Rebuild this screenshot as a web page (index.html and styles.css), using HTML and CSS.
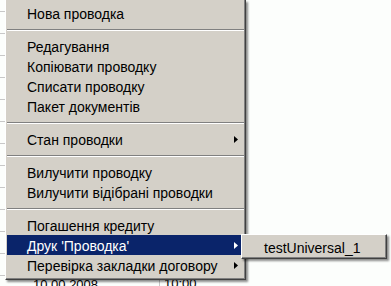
FILE: index.html
```html
<!DOCTYPE html>
<html>
<head>
<meta charset="utf-8">
<link rel="stylesheet" href="styles.css">
</head>
<body>
<div class="screen">
  <div class="grid">
    <div class="row"></div><div class="row"></div><div class="row"></div><div class="row"></div>
    <div class="row"></div><div class="row"></div><div class="row"></div><div class="row"></div>
    <div class="row"></div><div class="row"></div><div class="row"></div><div class="row"></div>
    <div class="row last"><span class="c1">10.00.2008</span><span class="c2">10:00</span></div>
  </div>

  <div class="menu">
    <div class="item">Нова проводка</div>
    <div class="sep"></div>
    <div class="item">Редагування</div>
    <div class="item">Копіювати проводку</div>
    <div class="item">Списати проводку</div>
    <div class="item">Пакет документів</div>
    <div class="sep"></div>
    <div class="item sub">Стан проводки<svg class="arrow" width="4" height="7" viewBox="0 0 4 7"><polygon points="0,0 4,3.5 0,7"/></svg></div>
    <div class="sep"></div>
    <div class="item">Вилучити проводку</div>
    <div class="item">Вилучити відібрані проводки</div>
    <div class="sep"></div>
    <div class="item">Погашення кредиту</div>
    <div class="item sub active">Друк 'Проводка'<svg class="arrow" width="4" height="7" viewBox="0 0 4 7"><polygon points="0,0 4,3.5 0,7"/></svg></div>
    <div class="item sub">Перевірка закладки договору<svg class="arrow" width="4" height="7" viewBox="0 0 4 7"><polygon points="0,0 4,3.5 0,7"/></svg></div>
  </div>

  <div class="submenu">
    <div class="item">testUniversal_1</div>
  </div>
</div>
</body>
</html>
```
FILE: styles.css
```css
html, body {
  margin: 0;
  padding: 0;
}
body {
  background: #fcfefc;
  font-family: "Liberation Sans", Arial, sans-serif;
  font-size: 14px;
  color: #000;
}
.screen {
  position: relative;
  width: 391px;
  height: 286px;
  overflow: hidden;
}
.grid {
  display: flex;
  flex-direction: column;
  padding-top: 11px;
}
.row {
  height: 22px;
  box-sizing: border-box;
  border-top: 1px solid #c8c8c8;
  width: 240px;
  flex: none;
}
.row.last {
  display: flex;
  align-items: flex-start;
  font-size: 13px;
  line-height: 15px;
  padding-top: 1px;
}
.row.last .c1 { flex: none; margin-left: 33px; width: 126px; }
.row.last .c2 { flex: none; border-left: 1px solid #c8c8c8; padding-left: 4px; height: 22px; margin-top: -1px; }

.menu {
  position: absolute;
  left: 5px;
  top: 0;
  width: 241px;
  height: 280px;
  padding: 3px 3px 3px 1px;
  box-sizing: border-box;
  background: #d4d0c8;
  border-left: 1px solid #ffffff;
  border-bottom: 1px solid #404040;
  border-right: 1px solid #404040;
  box-shadow: inset -1px -1px 0 #808080, 2px 2px 2px rgba(0,0,0,0.45);
}
.item {
  height: 20px;
  line-height: 20px;
  padding-left: 20px;
  padding-top: 1px;
  box-sizing: border-box;
  white-space: nowrap;
  display: flex;
  align-items: center;
}
.sub .arrow {
  margin-left: auto;
  margin-right: 4px;
  fill: #000;
}
.item.active {
  background: #0a246a;
  color: #fff;
}
.item.active .arrow { fill: #fff; }
.sep {
  height: 13px;
  box-sizing: border-box;
  padding-top: 6px;
  margin-right: -2px;
}
.sep::before {
  content: "";
  display: block;
  height: 1px;
  background: #808080;
  border-bottom: 1px solid #ffffff;
}

.submenu {
  position: absolute;
  left: 241px;
  top: 234px;
  width: 146px;
  height: 25px;
  box-sizing: border-box;
  padding: 2px;
  background: #d4d0c8;
  border-left: 1px solid #ffffff;
  border-top: 1px solid #ffffff;
  border-right: 1px solid #404040;
  border-bottom: 1px solid #404040;
  box-shadow: inset -1px -1px 0 #808080, 2px 2px 2px rgba(0,0,0,0.45);
}
.submenu .item {
  padding-left: 20px;
}
```
